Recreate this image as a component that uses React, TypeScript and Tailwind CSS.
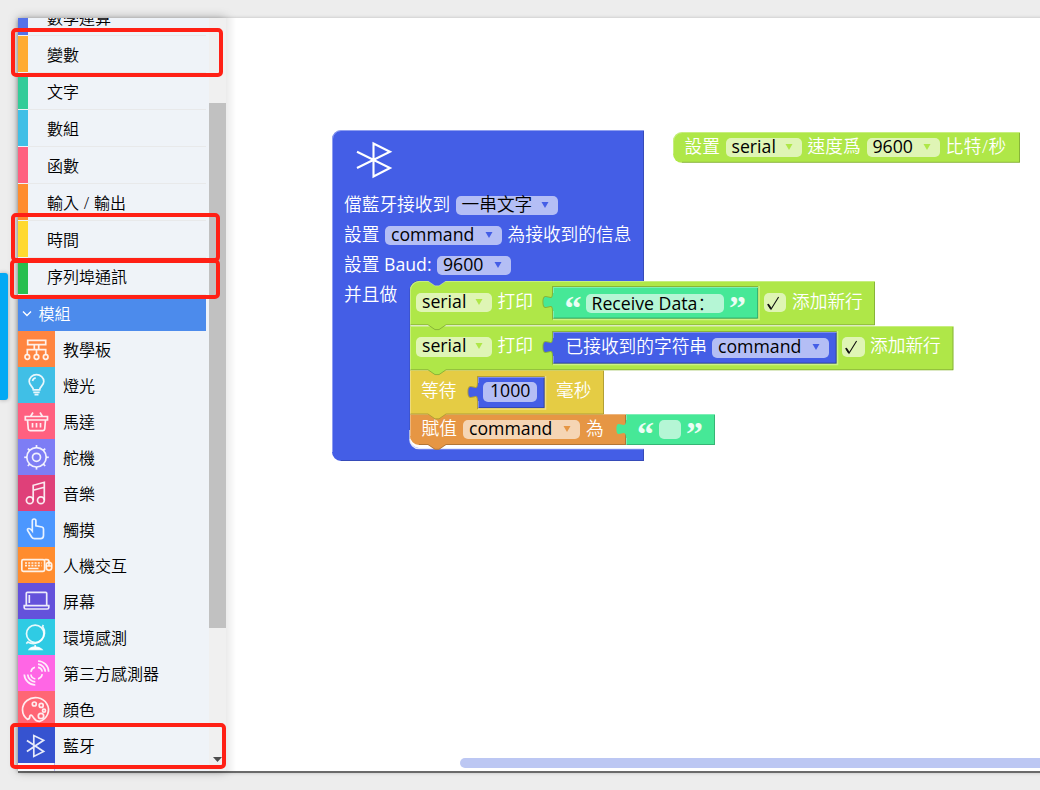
import React from "react";

/* ---------- palette ---------- */
const BLUE = "#445ee6";
const LIME = "#afe748";
const TEAL = "#46e897";
const YELLOW = "#e5cc44";
const ORANGE = "#e69644";

/* ---------- sidebar ---------- */
const basics = [
  { name: "數學運算", tone: "bg-[#5572e8]" },
  { name: "變數", tone: "bg-[#ffab32]" },
  { name: "文字", tone: "bg-[#33cc99]" },
  { name: "數組", tone: "bg-[#40bfe6]" },
  { name: "函數", tone: "bg-[#ff6080]" },
  { name: "輸入 / 輸出", tone: "bg-[#ff8c2e]" },
  { name: "時間", tone: "bg-[#ffd930]" },
  { name: "序列埠通訊", tone: "bg-[#28bf4f]" },
];

const dirs = [0, 45, 90, 135, 180, 225, 270, 315];

const modules = [
  {
    name: "教學板",
    tone: "bg-[#ff8540]",
    icon: (
      <>
        <path d="M9.7 9.3H27.7V13.7H9.7ZM16.3 13.7V18.7H9.3V23.5M20.7 13.7V18.7H27.7V23.5M18.5 18.7V23.5M16.3 18.7H20.7" />
        <circle cx="9.3" cy="26" r="2.3" />
        <circle cx="18.5" cy="26" r="2.3" />
        <circle cx="27.7" cy="26" r="2.3" />
      </>
    ),
  },
  {
    name: "燈光",
    tone: "bg-[#40bfe6]",
    icon: (
      <path d="M15.3 22.8C15.3 19.5 11.2 18.6 11.2 14.6A7.3 7 0 0 1 25.8 14.6C25.8 18.6 21.7 19.5 21.7 22.8ZM15.3 25.3H21.7M16.5 27.6H20.5M14.5 14A4 4 0 0 1 17.7 10.8" />
    ),
  },
  {
    name: "馬達",
    tone: "bg-[#ff6080]",
    icon: (
      <path d="M7.3 13.5H29.5V17H7.3ZM9.5 17L10.3 26.2Q10.5 27.6 12 27.6H25Q26.5 27.6 26.7 26.2L27.5 17M14.5 20V24.5M18.5 20V24.5M22.5 20V24.5M12.5 13.5L15 9.5M24.5 13.5L22 9.5" />
    ),
  },
  {
    name: "舵機",
    tone: "bg-[#7d7df5]",
    icon: (
      <>
        <circle cx="18.5" cy="18.3" r="9.7" />
        <circle cx="18.5" cy="18.3" r="4" />
        {dirs.map((a) => (
          <path key={a} d="M18.5 8.6V6" transform={`rotate(${a} 18.5 18.3)`} />
        ))}
      </>
    ),
  },
  {
    name: "音樂",
    tone: "bg-[#df4079]",
    icon: (
      <>
        <circle cx="11.8" cy="25.2" r="3.4" />
        <circle cx="22.9" cy="25.2" r="3.4" />
        <path d="M15.2 25.2V10.3L26.3 7.3V25.2M15.2 15.3L26.3 12.3" />
      </>
    ),
  },
  {
    name: "觸摸",
    tone: "bg-[#4c97ff]",
    icon: (
      <path d="M14.3 20V9.8A1.8 1.8 0 0 1 17.9 9.8V14.8L24 16Q25.5 16.4 25.5 18V24.5Q25.5 27.6 22.5 27.6H16.5Q14.6 27.6 13.6 26L9.6 19.5Q9 17.5 11 17.5Q12.3 17.5 14.3 20Z" />
    ),
  },
  {
    name: "人機交互",
    tone: "bg-[#ff8c2e]",
    icon: (
      <>
        <rect x="3.8" y="12.7" width="22.8" height="11.6" rx="1.5" />
        <path d="M7 16H23.5M7 18.7H23.5" strokeDasharray="2 1.2" />
        <path d="M10 21.5H20.5M26.6 12.7H29Q31 12.7 31 15" />
        <rect x="28.3" y="15.3" width="5.4" height="8" rx="2.7" />
        <path d="M28.3 19H33.7M31 15.3V19" />
      </>
    ),
  },
  {
    name: "屏幕",
    tone: "bg-[#6451db]",
    icon: (
      <path d="M8.3 22.7V10.3Q8.3 9.3 9.3 9.3H27.7Q28.7 9.3 28.7 10.3V22.7M6.2 22.7H30.8V24.6Q30.8 26 29.3 26H7.7Q6.2 26 6.2 24.6ZM11.3 12V20" />
    ),
  },
  {
    name: "環境感測",
    tone: "bg-[#2fcbe4]",
    icon: (
      <>
        <circle cx="17.2" cy="14.8" r="8.7" />
        <path d="M25.4 6L24.6 7.4A11 11 0 0 1 9.8 23L8.3 24.6M17.2 26V28" />
        <path d="M11.5 30.3Q13 28 17.2 28T23.5 30.3Z" fill="white" />
      </>
    ),
  },
  {
    name: "第三方感測器",
    tone: "bg-[#ff66e5]",
    icon: (
      <>
        <path d="M20 6A11 11 0 0 1 30.7 16.7M20 9.2A8 8 0 0 1 27.3 16.7M20 12.3A5 5 0 0 1 24.2 16.7" />
        <path d="M17.3 30A11 11 0 0 1 6.3 19.5M17.3 26.8A8 8 0 0 1 9.7 19.5M17.3 23.8A5 5 0 0 1 12.9 19.5" />
        <path d="M12.9 16.8A5.6 5.6 0 0 1 17 12.2M24.2 19.2A5.6 5.6 0 0 1 20 23.8" />
      </>
    ),
  },
  {
    name: "顔色",
    tone: "bg-[#ff6675]",
    icon: (
      <>
        <path d="M9.5 28.4A13 12.2 0 1 1 21.5 30.4C17 30.4 17 28.5 14.7 25.5Q13 23 11.8 25.2Q12 27.8 9.5 28.4Z" />
        <circle cx="16.3" cy="13" r="2" />
        <circle cx="23.2" cy="14.4" r="2" />
        <circle cx="26" cy="19.7" r="1.5" />
        <circle cx="23" cy="25" r="2.7" />
      </>
    ),
  },
  {
    name: "藍牙",
    tone: "bg-[#3653d0]",
    icon: <path d="M8.9 24.5L25.6 13.3L15.8 8.6V29.4L25.6 24.5L8.9 13.5" />,
  },
];

function Sidebar() {
  return (
    <aside className="flex h-full w-[208px] shrink-0 justify-between bg-[#eff3f8] shadow-[0_0_10px_rgba(0,0,0,0.28)]">
      <div className="flex h-full w-[188px] flex-col overflow-hidden text-base font-[350] text-black [word-spacing:0.6px]">
        {basics.map((item, i) => (
          <div key={item.name} className={`flex h-[37px] shrink-0 items-stretch ${i === 0 ? "-mt-[19px]" : ""}`}>
            <div className={`mb-px w-[10px] ${item.tone}`} />
            <div className="flex flex-1 items-center border-b border-[#e8e9ea] pt-px pl-[19px]">{item.name}</div>
          </div>
        ))}
        <div className="flex h-9 shrink-0 items-center bg-[#4c8bec] pt-[2px] text-white">
          <svg className="ml-[4px] h-[8px] w-[10px]" viewBox="0 0 10 8" fill="none" stroke="white" strokeWidth="1.4">
            <path d="M1 1.5L5 5.5L9 1.5" />
          </svg>
          <span className="ml-[6.5px]">模組</span>
        </div>
        {modules.map((m) => (
          <div key={m.name} className="flex h-9 shrink-0 items-center">
            <div className={`h-9 w-[37px] ${m.tone}`}>
              <svg className="block h-9 w-[37px]" viewBox="0 0 37 36" fill="none" stroke="white" strokeOpacity="0.88" strokeWidth="1.7">
                {m.icon}
              </svg>
            </div>
            <span className="pt-px pl-[8px]">{m.name}</span>
          </div>
        ))}
        <div className="h-2 w-[37px] shrink-0 border-r border-[#b9b4ee] bg-[#f8f9fc]" />
      </div>
      <div className="flex w-[17px] flex-col items-center bg-[#f0f0f0] pt-[85px]">
        <div className="h-[525px] w-full bg-[#c1c1c1]" />
        <svg className="mt-[129px] h-[5px] w-[9px]" viewBox="0 0 9 5">
          <path d="M0 0H9L4.5 5Z" fill="#4d4d4d" />
        </svg>
      </div>
    </aside>
  );
}

/* ---------- blocks ---------- */
type ShapeProps = {
  w: number;
  h: number;
  fill: string;
  bump?: boolean;
  tab?: boolean;
  topRound?: boolean;
  bottomRound?: boolean;
  inset?: string;
};

function Shape({ w, h, fill, bump, tab, topRound, bottomRound, inset }: ShapeProps) {
  const tl = topRound ? "A9 9 0 0 1 9 0" : "";
  const start = topRound ? "M0 9" : "M0 0";
  const bottom = bump ? "H36l-7 4.8h-4l-7 -4.8" : "";
  const end = bottomRound ? `H9A9 9 0 0 1 0 ${h - 9}` : "H0";
  const left = tab ? "V24c0 -12 -9.6 3 -9.6 -9s9.6 3 9.6 -9" : "";
  const body = `${start}${tl}H${w}V${h}${bottom}${end}${left}Z`;
  const light = `M0.5 ${bottomRound ? h - 9 : h}${topRound ? "V9.5A9 9 0 0 1 9.5 0.5" : "V0.5"}H${w}`;
  return (
    <svg className="absolute inset-0 -z-10 overflow-visible" width={w} height={h}>
      {inset && (
        <>
          <path d={body} fill="none" stroke="#000" strokeOpacity="0.22" strokeWidth="2" />
          <path d={`M0 ${h + 1}H${w + 1}V-1`} fill="none" stroke={inset} strokeWidth="1.5" />
        </>
      )}
      <path d={body} fill={fill} />
      <path d={`M${w - 0.5} 1V${h - 0.5}${bottom}${bottomRound ? "H9" : "H0"}`} fill="none" stroke="#000" strokeOpacity="0.22" />
      {!tab && <path d={light} fill="none" stroke="#fff" strokeOpacity="0.3" />}
      {tab && <path d={`M0.5 ${h}V24M0.5 6V0.5H${w}`} fill="none" stroke="#fff" strokeOpacity="0.3" />}
    </svg>
  );
}

function Label({ className = "", children }: { className?: string; children: React.ReactNode }) {
  return <span className={`block h-[19px] shrink-0 leading-4 font-[350] text-white ${className}`}>{children}</span>;
}

function Field({ className = "", arrow, children }: { className?: string; arrow?: string; children?: React.ReactNode }) {
  return (
    <span className={`flex h-[19.5px] shrink-0 justify-between rounded-[5px] bg-white/60 pr-[9px] pl-[6px] leading-4 text-black ${className}`}>
      <span>{children}</span>
      {arrow && (
        <svg className="mt-[6px] h-[6px] w-[8px]" viewBox="0 0 8 6">
          <path d="M0.5 0H7.5L4 6Z" fill={arrow} />
        </svg>
      )}
    </span>
  );
}

function Check({ className = "" }: { className?: string }) {
  return (
    <span className={`flex h-[19.5px] w-[22.5px] shrink-0 rounded-[5px] bg-white/60 ${className}`}>
      <svg className="h-[20px] w-[22px]" viewBox="0 0 22 20" fill="none" stroke="#111" strokeWidth="1.1">
        <path d="M3.8 11L7 16.2L14.6 4" />
        <path d="M4 11.2L6.8 15.4" strokeWidth="1.8" />
      </svg>
    </span>
  );
}

function Quote({ className = "", children }: { className?: string; children: React.ReactNode }) {
  return (
    <span className={`block h-[19px] w-4 shrink-0 text-center font-['Liberation_Serif',serif] text-[34px] leading-[28px] font-bold text-white/90 ${className}`}>
      {children}
    </span>
  );
}

function Workspace() {
  return (
    <main className="relative h-full flex-1 overflow-hidden bg-white text-[17.7px] whitespace-nowrap">
      <div className="absolute inset-y-0 left-0 w-[10px] bg-linear-to-r from-black/8 to-transparent" />

      {/* bluetooth event block */}
      <section className="absolute top-[111.7px] left-[106px] isolate h-[331px] w-[312px]">
        <svg className="absolute inset-0 -z-10 overflow-visible" width="312" height="331">
          <path d="M0 9A9 9 0 0 1 9 0H312V151.3H87A9 9 0 0 0 78 160V309A9 9 0 0 0 87 318H312V331H9A9 9 0 0 1 0 322Z" fill={BLUE} />
          <path d="M78 300V309A9 9 0 0 0 87 318.5H312" fill="none" stroke="#fff" strokeWidth="1.6" strokeOpacity="0.85" />
          <path d="M0.5 322V9A9 9 0 0 1 9 0.5H312" fill="none" stroke="#fff" strokeOpacity="0.4" />
          <path d="M311.5 1V151M311.5 319V330.5H9M87 151A9 9 0 0 0 78 160V309" fill="none" stroke="#000" strokeOpacity="0.2" />
        </svg>
        <svg className="mt-[11px] ml-[23px] block h-[38px] w-[38px]" viewBox="0 0 38 38" fill="none" stroke="white" strokeWidth="2.1">
          <path d="M2 27L35 10.8L18.5 2.5V35.5L35 27L2 10.8" />
        </svg>
        <div className="mt-[17px] ml-[12px] flex flex-col gap-[10.5px]">
          <div className="flex">
            <Label className="w-[111.5px]">儅藍牙接收到</Label>
            <Field className="w-[102px] font-[350]" arrow={BLUE}>一串文字</Field>
          </div>
          <div className="flex">
            <Label className="w-[41px]">設置</Label>
            <Field className="w-[116.5px]" arrow={BLUE}>command</Field>
            <Label className="ml-[6px]">為接收到的信息</Label>
          </div>
          <div className="flex">
            <Label className="w-[93px]">
              設置 <span className="font-normal">Baud:</span>
            </Label>
            <Field className="w-[73.5px]" arrow={BLUE}>9600</Field>
          </div>
          <Label>并且做</Label>
        </div>
      </section>

      {/* stacked statements */}
      <div className="absolute top-[263.3px] left-[184px] flex flex-col items-start">
        <section className="relative isolate z-40 flex h-[44.3px] w-[465px] items-start pt-[11.7px] pl-[6px]">
          <Shape w={465} h={44.3} fill={LIME} topRound bump />
          <Notch />
          <Field className="w-[75.5px]" arrow={LIME}>serial</Field>
          <Label className="ml-[6px] w-[55px]">打印</Label>
          <div className="relative isolate -mt-[5.7px] flex h-[31.5px] w-[205px] pt-[6.3px]">
            <Shape w={205} h={31.5} fill={TEAL} tab inset="#cdf285" />
            <Quote className="ml-[12px]">“</Quote>
            <Field className="ml-[5px] w-[138.5px]">
              Receive Data<span className="font-['Noto_Sans_CJK_SC',sans-serif] font-light">：</span>
            </Field>
            <Quote className="ml-[5px]">”</Quote>
          </div>
          <Check className="ml-[6px]" />
          <Label className="ml-[6px]">添加新行</Label>
        </section>
        <section className="relative isolate z-30 flex h-[44.3px] w-[543.5px] items-start pt-[11.7px] pl-[6px]">
          <Shape w={543.5} h={44.3} fill={LIME} bump />
          <Field className="w-[75.5px]" arrow={LIME}>serial</Field>
          <Label className="ml-[6px] w-[55px]">打印</Label>
          <div className="relative isolate -mt-[5.7px] flex h-[31.5px] w-[283.5px] pt-[6.8px]">
            <Shape w={283.5} h={31.5} fill={BLUE} tab inset="#cdf285" />
            <Label className="ml-[13px] w-[146.5px]">已接收到的字符串</Label>
            <Field className="w-[117px]" arrow={BLUE}>command</Field>
          </div>
          <Check className="ml-[6px]" />
          <Label className="ml-[5.5px]">添加新行</Label>
        </section>
        <section className="relative isolate z-20 flex h-[44.5px] w-[194px] items-start pt-[12.5px] pl-[11px]">
          <Shape w={194} h={44.5} fill={YELLOW} bump />
          <Label className="w-[56.5px]">等待</Label>
          <div className="relative isolate -mt-[5.5px] flex h-[31px] w-[66.5px] pt-[5.5px]">
            <Shape w={66.5} h={31} fill={BLUE} tab inset="#f0dd80" />
            <Field className="ml-[5.5px] w-[54px] pl-[7px]">1000</Field>
          </div>
          <Label className="ml-[12px]">毫秒</Label>
        </section>
        <section className="relative isolate z-10 flex h-[31px] w-[216px] items-start pt-[5.5px] pl-[11.5px]">
          <Shape w={216} h={31} fill={ORANGE} bottomRound bump />
          <Label className="w-[41.5px]">賦值</Label>
          <Field className="w-[117px]" arrow={ORANGE}>command</Field>
          <Label className="ml-[6px] w-[40px]">為</Label>
          <div className="relative isolate -mt-[5.5px] flex h-[31px] w-[89px] shrink-0 pt-[5.5px]">
            <Shape w={89} h={31} fill={TEAL} tab />
            <Quote className="ml-[11px]">“</Quote>
            <Field className="ml-[5.5px] w-[22.5px]" />
            <Quote className="ml-[5px]">”</Quote>
          </div>
        </section>
      </div>

      {/* serial speed block */}
      <section className="absolute top-[114.3px] left-[446.5px] isolate flex h-[30.8px] w-[347px] pt-[5.5px] pl-[12px]">
        <Shape w={347} h={30.8} fill={LIME} topRound bottomRound />
        <Label className="w-[41px]">設置</Label>
        <Field className="w-[76px]" arrow={LIME}>serial</Field>
        <Label className="ml-[6px] w-[59px]">速度爲</Label>
        <Field className="w-[73px]" arrow={LIME}>9600</Field>
        <Label className="ml-[6px] tracking-[0.5px]">比特/秒</Label>
      </section>

      {/* horizontal scrollbar */}
      <div className="absolute right-0 bottom-[3px] left-[234px] h-[10px] rounded-l-full bg-[#bcc7f3]" />
    </main>
  );
}

/* blue connector that dips into the first statement */
function Notch() {
  return (
    <svg className="absolute top-0 left-[18px] h-[6px] w-[18px]" viewBox="0 0 18 6">
      <path d="M0 0L7 4.8H11L18 0Z" fill={BLUE} />
      <path d="M0 0L7 4.8H11L18 0" fill="none" stroke="#fff" strokeOpacity="0.3" />
    </svg>
  );
}

const frame = "absolute rounded-[5px] border-4 border-[#ff2015]";

export default function App() {
  return (
    <div className="relative h-[790px] w-[1040px] overflow-hidden bg-[#ededed] pt-[18px] pl-[18px] font-['Open_Sans','Noto_Sans_CJK_TC',sans-serif]">
      <div className="absolute top-[273px] left-0 h-[127px] w-2 rounded-r-[3px] bg-[#03a9f4] shadow-[0_0_4px_rgba(0,0,0,0.3)]" />
      <div className="flex h-[753px] w-[1030px] bg-white shadow-[0_2px_0_0_#6a6a6a,0_1px_4px_0_rgba(0,0,0,0.35)]">
        <Sidebar />
        <Workspace />
      </div>
      <div className={`${frame} top-[28px] left-[11px] h-[49px] w-[212px]`} />
      <div className={`${frame} top-[213px] left-[11px] h-[49px] w-[209px]`} />
      <div className={`${frame} top-[259px] left-[10px] h-[40px] w-[210px]`} />
      <div className={`${frame} top-[723px] left-[9.5px] h-[46px] w-[216px]`} />
    </div>
  );
}
